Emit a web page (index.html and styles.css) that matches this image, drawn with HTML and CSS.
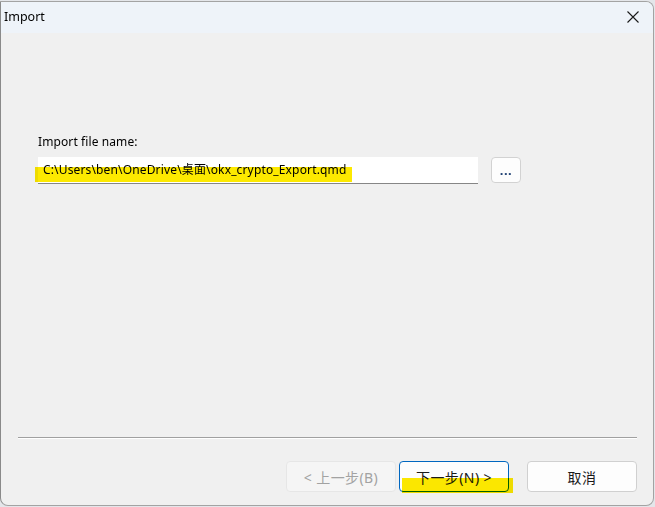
FILE: index.html
```html
<!DOCTYPE html>
<html lang="en">
<head>
    <meta charset="utf-8">
    <title>Import</title>
    <link rel="stylesheet" href="styles.css">
</head>
<body>
    <div class="window">
        <div class="titlebar">
            <span class="title">Import</span>
            <svg class="close" width="12" height="12" viewBox="0 0 12 12">
                <path d="M0.5 0.5 L11.5 11.5 M11.5 0.5 L0.5 11.5" stroke="#1a1a1a" stroke-width="1.1" fill="none"/>
            </svg>
        </div>
        <div class="content">
            <label class="field-label">Import file name:</label>
            <div class="field-row">
                <div class="text-input">C:\Users\ben\OneDrive\桌面\okx_crypto_Export.qmd</div>
                <button class="browse">...</button>
                <span class="marker marker-path"></span>
            </div>
            <div class="separator"></div>
            <div class="buttons">
                <button class="btn disabled">&lt; 上一步(B)</button>
                <button class="btn primary">下一步(N) &gt;<span class="marker marker-next"></span></button>
                <button class="btn cancel">取消</button>
            </div>
        </div>
    </div>
</body>
</html>
```

FILE: styles.css
```css
body {
    margin: 0;
    padding: 0;
    background: #e4e6ea;
    font-family: "Noto Sans", "Noto Sans CJK SC", sans-serif;
    font-size: 12px;
    color: #000;
}
.window {
    box-sizing: border-box;
    width: 654px;
    height: 505px;
    margin-top: 1px;
    border: 1px solid #a3a3a3;
    border-left-color: #8a8a8a;
    border-radius: 0 8px 8px 8px;
    background: #f0f0f0;
    overflow: hidden;
    display: flex;
    flex-direction: column;
}
.titlebar {
    height: 31px;
    flex: none;
    background: #eef3f9;
    display: flex;
    align-items: center;
    justify-content: space-between;
    padding: 0 14px 0 3px;
}
.title {
    font-size: 12.5px;
    margin-top: -2px;
}
.close {
    margin-top: -2px;
}
.content {
    flex: 1;
    display: flex;
    flex-direction: column;
    padding: 0 16px 13px 17px;
}
.field-label {
    margin: 100px 0 0 20px;
    line-height: 17px;
    letter-spacing: 0.1px;
}
.field-row {
    position: relative;
    display: flex;
    align-items: center;
    gap: 13px;
    margin: 7px 0 0 20px;
}
.text-input {
    box-sizing: border-box;
    width: 440px;
    height: 27px;
    background: #fff;
    border-bottom: 1px solid #868686;
    padding: 4px 0 0 5px;
    line-height: 17px;
    letter-spacing: 0.15px;
}
.browse {
    box-sizing: border-box;
    width: 30px;
    height: 26px;
    background: #fdfdfd;
    border: 1px solid #d2d2d2;
    border-radius: 4px;
    font-family: inherit;
    font-size: 13px;
    font-weight: bold;
    letter-spacing: 0.5px;
    color: #1d3f72;
    padding: 0;
    margin-top: -1px;
}
.marker {
    position: absolute;
    background: #fde900;
    mix-blend-mode: multiply;
    pointer-events: none;
}
.marker-path {
    left: -3px;
    top: 10px;
    width: 317px;
    height: 15px;
}
.separator {
    margin-top: auto;
    height: 1px;
    background: #a0a0a0;
    border-bottom: 1px solid #ffffff;
}
.buttons {
    display: flex;
    justify-content: flex-end;
    gap: 3px;
    margin-top: 22px;
}
.btn {
    position: relative;
    box-sizing: border-box;
    width: 110px;
    height: 31px;
    border-radius: 4px;
    border: 1px solid #d0d0d0;
    background: #fdfdfd;
    font-family: inherit;
    font-size: 14px;
    letter-spacing: 0.4px;
    color: #1a1a1a;
    padding: 0;
}
.disabled {
    background: #f5f5f5;
    border-color: #e6e6e6;
    color: #a2a2a2;
}
.primary {
    border: 1px solid #0067c0;
}
.cancel {
    margin-left: 15px;
}
.marker-next {
    left: 2px;
    top: 16px;
    width: 111px;
    height: 15px;
}
```
